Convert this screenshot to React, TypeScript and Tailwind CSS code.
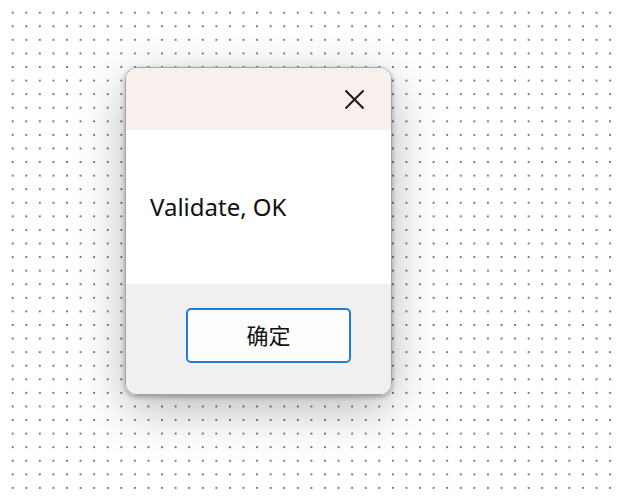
import React from "react";

export default function App() {
  return (
    <div className="relative h-[500px] w-[619px] overflow-hidden bg-white bg-[radial-gradient(circle,#7a7a7a_0.9px,transparent_1.4px)] bg-[length:13.59px_13.59px] bg-[position:5.9px_5.9px] font-['Noto_Sans','Noto_Sans_CJK_SC',sans-serif]">
      <div className="ml-[125px] mt-[67px] flex h-[328px] w-[267px] flex-col overflow-hidden rounded-[12px] border border-[#a5a5a5] shadow-[0_2px_5px_rgba(0,0,0,0.3),0_14px_50px_rgba(0,0,0,0.28)]">
        <div className="flex h-[62px] shrink-0 items-center justify-end bg-[#f8f0ec] pr-[26px]">
          <svg width="21" height="21" viewBox="0 0 21 21" className="mt-[1px]">
            <path d="M1.5 1.5 L19.5 19.5 M19.5 1.5 L1.5 19.5" stroke="#1a1a1a" strokeWidth="2" fill="none" />
          </svg>
        </div>
        <div className="flex h-[154px] shrink-0 items-center bg-white pl-[24px]">
          <span className="text-[24px] leading-none text-[#111]">Validate, OK</span>
        </div>
        <div className="flex flex-1 items-start bg-[#f0f0f0] pl-[60px] pt-[24px]">
          <button className="flex h-[55px] w-[165px] items-center justify-center rounded-[5px] border-2 border-[#1e7fd8] bg-[#fdfdfd] text-[22px] text-[#111]">
            确定
          </button>
        </div>
      </div>
    </div>
  );
}
